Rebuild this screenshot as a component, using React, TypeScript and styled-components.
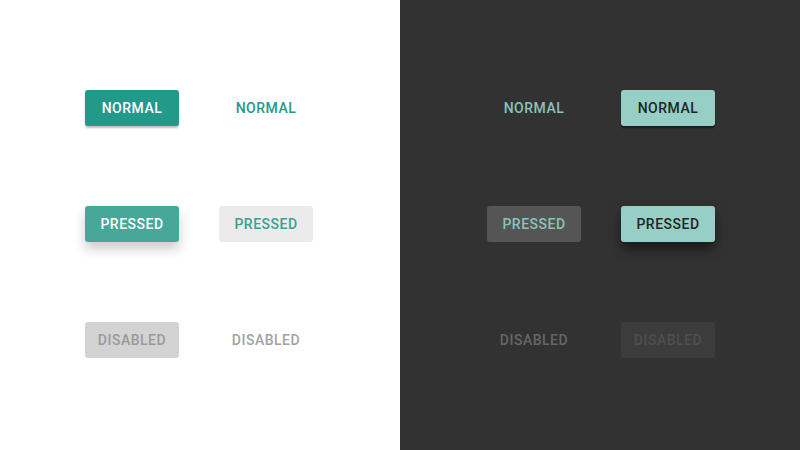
import * as React from "react";
import styled, { createGlobalStyle, css } from "styled-components";

type Theme = "light" | "dark";
type Kind = "raised" | "flat";
type State = "normal" | "pressed" | "disabled";

const GlobalStyle = createGlobalStyle`
  html, body {
    margin: 0;
    padding: 0;
    width: 800px;
    height: 450px;
    overflow: hidden;
  }
  body {
    font-family: Roboto, "Noto Sans", sans-serif;
  }
`;

const Page = styled.div`
  display: grid;
  grid-template-columns: 400px 400px;
  width: 800px;
  height: 450px;
`;

const Half = styled.div<{ $theme: Theme }>`
  box-sizing: border-box;
  display: flex;
  align-items: center;
  justify-content: center;
  background: ${(p) => (p.$theme === "dark" ? "#323232" : "#ffffff")};
  padding: ${(p) => (p.$theme === "dark" ? "0 0 0 2px" : "0 2px 0 0")};
`;

const ButtonGrid = styled.div`
  display: grid;
  grid-template-columns: 94px 94px;
  grid-auto-rows: 36px;
  column-gap: 40px;
  row-gap: 80px;
  margin-top: -2px;
`;

const palette = {
  light: {
    raised: {
      normal: { bg: "#239a89", fg: "#ffffff", shadow: "0 2px 2px rgba(0,0,0,0.25)" },
      pressed: { bg: "#47a799", fg: "#ffffff", shadow: "0 7px 12px rgba(0,0,0,0.2)" },
      disabled: { bg: "#d3d3d3", fg: "#9a9a9a", shadow: "none" },
    },
    flat: {
      normal: { bg: "transparent", fg: "#26998a", shadow: "none" },
      pressed: { bg: "#ebebeb", fg: "#3aa192", shadow: "none" },
      disabled: { bg: "transparent", fg: "#a2a2a2", shadow: "none" },
    },
  },
  dark: {
    raised: {
      normal: { bg: "#97cec6", fg: "#1e2624", shadow: "0 2px 2px rgba(0,0,0,0.45)" },
      pressed: { bg: "#97cec6", fg: "#1e2624", shadow: "0 7px 12px rgba(0,0,0,0.5)" },
      disabled: { bg: "#3c3c3c", fg: "#4f4f4f", shadow: "none" },
    },
    flat: {
      normal: { bg: "transparent", fg: "#88c4bb", shadow: "none" },
      pressed: { bg: "#555555", fg: "#88c4bb", shadow: "none" },
      disabled: { bg: "transparent", fg: "#666666", shadow: "none" },
    },
  },
};

const Button = styled.button<{ $theme: Theme; $kind: Kind; $state: State }>`
  box-sizing: border-box;
  width: 94px;
  height: 36px;
  border: none;
  border-radius: 3px;
  padding: 0;
  font-family: Roboto, "Noto Sans", sans-serif;
  font-size: 14px;
  font-weight: 500;
  letter-spacing: 0.5px;
  text-transform: uppercase;
  cursor: pointer;
  ${(p) => {
    const c = palette[p.$theme][p.$kind][p.$state];
    return css`
      background: ${c.bg};
      color: ${c.fg};
      box-shadow: ${c.shadow};
    `;
  }}
`;

const rows: State[] = ["normal", "pressed", "disabled"];

const ButtonSet: React.FC<{ theme: Theme; order: Kind[] }> = ({ theme, order }) => (
  <ButtonGrid>
    {rows.map((state) =>
      order.map((kind) => (
        <Button key={state + kind} $theme={theme} $kind={kind} $state={state} disabled={state === "disabled"}>
          {state}
        </Button>
      ))
    )}
  </ButtonGrid>
);

export default function App() {
  return (
    <>
      <GlobalStyle />
      <Page>
        <Half $theme="light">
          <ButtonSet theme="light" order={["raised", "flat"]} />
        </Half>
        <Half $theme="dark">
          <ButtonSet theme="dark" order={["flat", "raised"]} />
        </Half>
      </Page>
    </>
  );
}
